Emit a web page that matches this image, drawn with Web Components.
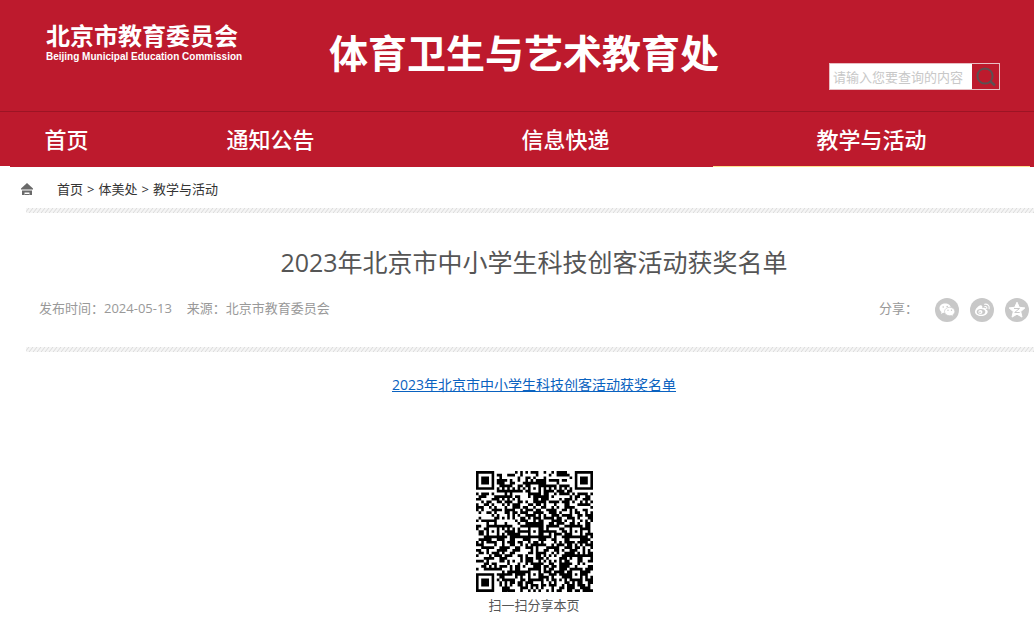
<!DOCTYPE html>
<html lang="zh-CN">
<head>
<meta charset="utf-8">
<title>2023年北京市中小学生科技创客活动获奖名单</title>
<style>
  body {
    margin: 0;
    background: #fff;
    color: #333;
    font: 13px/20px "Open Sans", "Noto Sans CJK SC", sans-serif;
    --red: #bd1a2d;
  }
</style>
</head>
<body>
<site-header>
  <search-box slot="search"></search-box>
</site-header>
<site-nav>
  <nav-item href="#home" short>首页</nav-item>
  <nav-item href="#notice">通知公告</nav-item>
  <nav-item href="#news">信息快递</nav-item>
  <nav-item href="#activity" active>教学与活动</nav-item>
</site-nav>
<bread-crumb></bread-crumb>
<article-page>
  <span slot="title">2023年北京市中小学生科技创客活动获奖名单</span>
  <span slot="date">发布时间：2024-05-13</span>
  <span slot="source">来源：北京市教育委员会</span>
  <share-bar slot="share"></share-bar>
  <file-link href="#list">2023年北京市中小学生科技创客活动获奖名单</file-link>
  <qr-code>扫一扫分享本页</qr-code>
</article-page>

<script>
function makeShadow(el, html) {
  const shadow = el.attachShadow({ mode: "open" });
  const template = document.createElement("template");
  template.innerHTML = html;
  shadow.append(template.content.cloneNode(true));
  return shadow;
}

customElements.define(
  "site-header",
  class extends HTMLElement {
    constructor() {
      super();
      makeShadow(this, `
        <style>
          :host { display: block; background: var(--red); color: #fff; }
          header { display: flex; align-items: flex-start; padding: 0 34px 0 46px; height: 111px; }
          .org { flex: none; width: 283px; padding-top: 22px; font-weight: bold; }
          .cn { display: block; font-size: 24px; line-height: 28px; }
          .en { display: block; font: bold 10px/14px "Liberation Sans", sans-serif; }
          a { color: inherit; text-decoration: none; }
          h1 { flex: none; margin: 0; padding-top: 28px; font-size: 39px; line-height: 50px; }
          slot { display: block; margin-left: auto; padding-top: 63px; }
        </style>
        <header>
          <a class="org" href="#home">
            <span class="cn">北京市教育委员会</span>
            <span class="en">Beijing Municipal Education Commission</span>
          </a>
          <h1>体育卫生与艺术教育处</h1>
          <slot name="search"></slot>
        </header>
      `);
    }
  }
);

customElements.define(
  "search-box",
  class extends HTMLElement {
    constructor() {
      super();
      makeShadow(this, `
        <style>
          :host { display: block; }
          form { display: flex; margin: 0; height: 25px; border: 1px solid #e8bdc2; }
          input { box-sizing: border-box; width: 142px; padding: 0 3px; border: 0; font: inherit; outline: 0; background: #fff; }
          input::placeholder { color: #c8c8c8; opacity: 1; }
          button { width: 27px; padding: 0; border: 0; background: var(--red); }
          svg { display: block; margin: auto; }
        </style>
        <form>
          <input type="text" placeholder="请输入您要查询的内容" aria-label="请输入您要查询的内容">
          <button type="button" aria-label="搜索">
            <svg width="21" height="21" viewBox="0 0 21 21" fill="none" stroke="#5c5052" stroke-width="2">
              <circle cx="10" cy="10" r="7.6"/>
              <path d="M15 15l5 4.5" stroke-width="2.4"/>
            </svg>
          </button>
        </form>
      `);
    }
  }
);

customElements.define(
  "site-nav",
  class extends HTMLElement {
    constructor() {
      super();
      // the list hangs 1px below the bar so its bottom line shows
      makeShadow(this, `
        <style>
          :host { display: block; background: var(--red); border-top: 1px solid #9c1424; height: 54px; }
          nav { display: flex; height: 55px; margin-left: 10px; padding-right: 4px; background: var(--red); }
        </style>
        <nav><slot></slot></nav>
      `);
    }
  }
);

customElements.define(
  "nav-item",
  class extends HTMLElement {
    constructor() {
      super();
      const shadow = makeShadow(this, `
        <style>
          :host { flex: 3 1 auto; display: block; }
          :host([short]) { flex-grow: 1; }
          a {
            display: block;
            color: #fff;
            font-size: 22px;
            font-weight: 500;
            line-height: 54px;
            text-align: center;
            text-decoration: none;
            border-bottom: 1px solid transparent;
          }
          :host([active]) a { border-color: #ffdf8e; }
        </style>
        <a><slot></slot></a>
      `);
      shadow.querySelector("a").href = this.getAttribute("href");
    }
  }
);

customElements.define(
  "bread-crumb",
  class extends HTMLElement {
    constructor() {
      super();
      makeShadow(this, `
        <style>
          :host { display: block; }
          nav { display: flex; align-items: center; padding: 13px 0 9px 21px; }
          svg { flex: none; margin-right: 24px; }
          a { color: #333; text-decoration: none; }
          span { margin: 0 4px; }
        </style>
        <nav>
          <svg width="12" height="12" viewBox="0 0 12 12" fill="#6a6a6a">
            <path d="M6 0L12 5.5V6.500H0V5.500Z"/>
            <path d="M1 7.500H11V12H8.500V9.500H3.500V12H1Z"/>
            <path d="M3.500 11h5V12h-5z"/>
          </svg>
          <a href="#home">首页</a><span>&gt;</span><a href="#dept">体美处</a><span>&gt;</span><a href="#activity">教学与活动</a>
        </nav>
      `);
    }
  }
);

customElements.define(
  "hatch-line",
  class extends HTMLElement {
    constructor() {
      super();
      makeShadow(this, `
        <style>
          :host { display: block; height: 5px; margin-left: 26px; }
          svg { display: block; width: 100%; height: 5px; background: #f5f5f5; }
        </style>
        <svg>
          <defs>
            <pattern id="hatch" width="4" height="5" patternUnits="userSpaceOnUse">
              <path d="M-1 5L3 0M3 5L7 0M-5 5L-1 0" stroke="#dadada" stroke-width="1"/>
            </pattern>
          </defs>
          <rect width="100%" height="5" fill="url(#hatch)"/>
        </svg>
      `);
    }
  }
);

customElements.define(
  "article-page",
  class extends HTMLElement {
    constructor() {
      super();
      makeShadow(this, `
        <style>
          :host { display: block; }
          h2 { margin: 0; padding: 29px 0 16px 34px; font-size: 25px; font-weight: normal; line-height: 40px; text-align: center; color: #555; }
          .meta { display: flex; align-items: flex-start; gap: 15px; padding: 0 5px 25px 39px; color: #999; }
          .meta slot[name="share"] { display: block; margin-left: auto; }
          .content { padding: 23px 0 0 34px; text-align: center; }
        </style>
        <hatch-line></hatch-line>
        <article>
          <h2><slot name="title"></slot></h2>
          <div class="meta">
            <slot name="date"></slot>
            <slot name="source"></slot>
            <slot name="share"></slot>
          </div>
          <hatch-line></hatch-line>
          <div class="content"><slot></slot></div>
        </article>
      `);
    }
  }
);

customElements.define(
  "share-bar",
  class extends HTMLElement {
    constructor() {
      super();
      makeShadow(this, `
        <style>
          :host { display: flex; align-items: flex-start; }
          span { margin-right: 17px; }
          div { display: flex; gap: 11px; }
          a { display: block; }
          svg { display: block; }
        </style>
        <span>分享：</span>
        <div>
          <a href="#wechat" aria-label="微信">
            <svg width="24" height="24" viewBox="0 0 24 24">
              <circle cx="12" cy="12" r="12" fill="#c8c8c8"/>
              <path d="M10.2 5.6c-3.2 0-5.7 2-5.7 4.7 0 1.500.8 2.800 2 3.700l-.5 1.900 2.100-1.100c.7.200 1.400.3 2.100.3 3.200 0 5.700-2.100 5.700-4.800s-2.500-4.700-5.700-4.700z" fill="#fff"/>
              <path d="M14.700 9.300c-3 0-5.200 1.900-5.200 4.200s2.200 4.200 5.200 4.200c.6 0 1.200-.1 1.700-.2l1.900 1-.5-1.700c1.200-.8 2-2 2-3.300 0-2.300-2.200-4.200-5.100-4.200z" fill="#fff" stroke="#c8c8c8" stroke-width=".7"/>
              <g fill="#c8c8c8"><circle cx="8.200" cy="9" r=".8"/><circle cx="12.200" cy="8.500" r=".8"/><circle cx="13" cy="12.300" r=".7"/><circle cx="16.500" cy="12.300" r=".7"/></g>
            </svg>
          </a>
          <a href="#weibo" aria-label="微博">
            <svg width="24" height="24" viewBox="0 0 24 24">
              <circle cx="12" cy="12" r="12" fill="#c8c8c8"/>
              <path d="M10.500 7.300c-2 .5-5.500 3.600-5.500 6.700 0 2.300 2.700 4 6 4 4 0 6.700-2.200 6.700-4.300 0-1.200-.9-1.800-1.800-2.100.4-1.600-.7-2.500-3.600-1.400.4-1.700-.2-3.200-1.800-2.900z" fill="#fff"/>
              <ellipse cx="11" cy="13.800" rx="4.300" ry="2.900" fill="#c8c8c8"/>
              <circle cx="10.400" cy="14" r="2.100" fill="#fff"/>
              <circle cx="10" cy="14.200" r=".8" fill="#c8c8c8"/>
              <path d="M14.500 6.200c3-.5 5.300 1.600 4.600 4.600M14.800 8.500c1.500-.3 2.300.6 2 2" fill="none" stroke="#fff" stroke-width="1.100" stroke-linecap="round"/>
            </svg>
          </a>
          <a href="#qzone" aria-label="QQ空间">
            <svg width="24" height="24" viewBox="0 0 24 24">
              <circle cx="12" cy="12" r="12" fill="#c8c8c8"/>
              <path d="M12 4.200l2.300 5.100 5.600.6-4.200 3.700 1.300 5.500-5-2.900-5 2.900 1.300-5.500-4.200-3.700 5.600-.6z" fill="#fff" stroke="#fff" stroke-linejoin="round"/>
              <path d="M9 10.500h5.500l-4.800 4h5" fill="none" stroke="#c8c8c8" stroke-width="1"/>
            </svg>
          </a>
        </div>
      `);
    }
  }
);

customElements.define(
  "file-link",
  class extends HTMLElement {
    constructor() {
      super();
      const shadow = makeShadow(this, `
        <style>
          :host { display: block; font-size: 14px; }
          a { color: #0a62c0; text-decoration: underline; }
        </style>
        <a><slot></slot></a>
      `);
      shadow.querySelector("a").href = this.getAttribute("href");
    }
  }
);

customElements.define(
  "qr-code",
  class extends HTMLElement {
    constructor() {
      super();
      const shadow = makeShadow(this, `
        <style>
          :host { display: block; padding-top: 76px; color: #555; }
          svg { display: block; margin: 0 auto 3px; }
        </style>
        <svg width="117" height="121" viewBox="0 0 45 45" preserveAspectRatio="none" role="img" aria-label="二维码">
          <path/>
        </svg>
        <slot></slot>
      `);
      shadow.querySelector("path").setAttribute("d", this.modules());
    }

    modules() {
      const size = 45;
      const last = size - 1;
      let seed = 20240513;
      let d = "";
      const ring = (x, y, cx, cy) => Math.max(Math.abs(x - cx), Math.abs(y - cy));
      const finders = [[3, 3], [last - 3, 3], [3, last - 3]];
      const aligns = [[22, 6], [6, 22], [22, 22], [38, 22], [22, 38], [38, 38]];
      for (let y = 0; y < size; y++) {
        for (let x = 0; x < size; x++) {
          seed = (seed * 1103515245 + 12345) % 2147483648;
          let dark = seed / 2147483648 < 0.52;
          // timing rows
          if (x === 6) dark = y % 2 === 0;
          if (y === 6) dark = x % 2 === 0;
          for (const [cx, cy] of aligns) {
            const r = ring(x, y, cx, cy);
            if (r <= 2) dark = r !== 1;
          }
          for (const [cx, cy] of finders) {
            const r = ring(x, y, cx, cy);
            if (r <= 4) dark = r === 3 || r < 2;
          }
          if (dark) d += `M${x} ${y}h1v1h-1z`;
        }
      }
      return d;
    }
  }
);
</script>
</body>
</html>
